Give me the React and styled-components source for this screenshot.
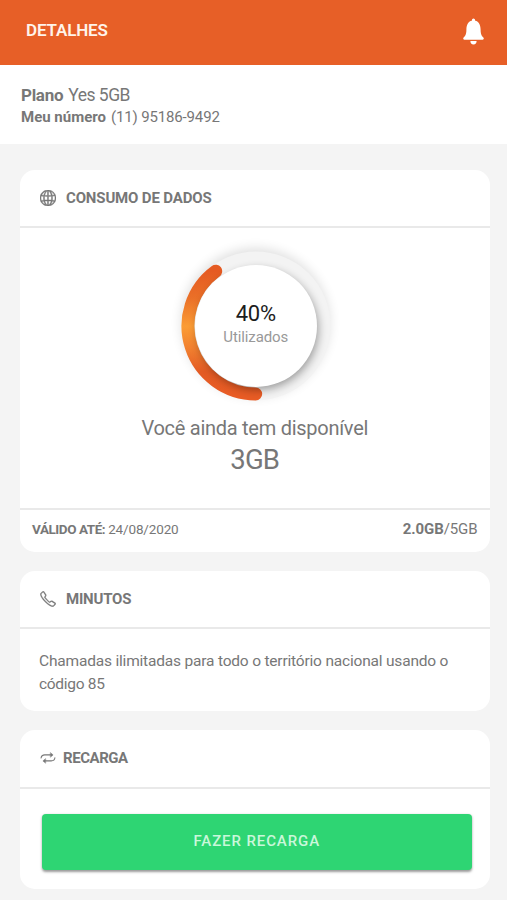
import React from 'react';
import styled, { createGlobalStyle } from 'styled-components';
import { SlGlobe, SlPhone } from 'react-icons/sl';
import { IoIosNotifications } from 'react-icons/io';

const GlobalStyle = createGlobalStyle`
  * { box-sizing: border-box; }
  body {
    margin: 0;
    background: #f4f4f4;
    color: #777;
    font-family: Roboto, "Liberation Sans", sans-serif;
  }
`;

const Screen = styled.div`
  width: 507px;
  height: 900px;
  overflow: hidden;
  background: #f4f4f4;
`;

const Header = styled.header`
  height: 65px;
  padding: 0 17px 0 26px;
  display: flex;
  align-items: center;
  justify-content: space-between;
  background: #e75f27;
  color: #fff;
`;

const Text = styled.span`
  display: ${(p) => (p.$block ? 'block' : 'inline')};
  font-size: ${(p) => p.$size}px;
  line-height: ${(p) => p.$line || 20}px;
  font-weight: ${(p) => p.$weight || 400};
  letter-spacing: ${(p) => p.$track || 0}px;
  white-space: nowrap;
`;

const Title = styled(Text)`
  margin-bottom: 6px;
  color: #fff3ea;
`;

const BellButton = styled.button`
  display: flex;
  padding: 0;
  margin-bottom: 3px;
  border: 0;
  background: none;
  color: #fff;
`;

const Plan = styled.section`
  height: 79px;
  padding: 19px 21px 0;
  background: #fff;
`;

const PlanLine = styled.div`
  display: flex;
  gap: ${(p) => p.$gap}px;
  height: 22px;
  align-items: center;
`;

const Cards = styled.main`
  display: flex;
  flex-direction: column;
  gap: 19px;
  padding: 25.5px 17.5px 0 20px;
`;

const Card = styled.section`
  height: ${(p) => p.$height}px;
  border-radius: 15px;
  background: #fff;
`;

const CardHeader = styled.header`
  display: flex;
  align-items: center;
  height: ${(p) => p.$height || 58.5}px;
  padding: 0 20px;
  gap: ${(p) => p.$gap || 10}px;
  border-bottom: 2px solid #e9e9e9;
`;

const Usage = styled.div`
  display: flex;
  flex-direction: column;
  align-items: center;
  height: 280px;
  padding-top: 8px;
`;

const Gauge = styled.div`
  display: grid;
  place-items: center;
  width: 180px;
  height: 180px;
  margin-left: 2px;
  > * { grid-area: 1 / 1; }
`;

const GaugeLabel = styled.div`
  display: flex;
  flex-direction: column;
  align-items: center;
  padding-bottom: 4px;
  color: #999;
`;

const Percent = styled(Text)`
  color: #1c1c1c;
`;

const Available = styled.div`
  display: flex;
  flex-direction: column;
  align-items: center;
  margin-top: -1px;
`;

const CardFooter = styled.footer`
  display: flex;
  align-items: center;
  justify-content: space-between;
  height: 42px;
  padding: 0 12px 3px;
  border-top: 2px solid #e9e9e9;
`;

const Body = styled.div`
  padding: 20.5px 19px 0;
`;

const ActionArea = styled.div`
  padding: 25.5px 17.5px 0 21.5px;
`;

const ActionButton = styled.button`
  display: flex;
  align-items: center;
  justify-content: center;
  width: 100%;
  height: 55.5px;
  padding: 0 0 1px;
  border: 0;
  border-radius: 4px;
  background: #2ed573;
  color: #c9f7da;
  font-family: inherit;
  box-shadow: 0 1.5px 2.5px rgba(0, 0, 0, 0.4);
`;

const LineIcon = styled.svg`
  fill: none;
  stroke: currentColor;
  stroke-width: 1.1;
  stroke-linecap: round;
  stroke-linejoin: round;
`;

const ArrowHead = styled.path`
  fill: currentColor;
  stroke-width: 0.5;
`;

function LoopIcon() {
  return (
    <LineIcon width="16" height="16" viewBox="0 0 16 16">
      <path d="M1.1 8C1.3 6 2.6 4.9 4.8 4.9H11.5" />
      <ArrowHead d="M10.6 2.8L13.1 4.9L10.6 7Z" />
      <path d="M14.9 7.8C14.7 9.8 13.4 10.9 11.2 10.9H4.5" />
      <ArrowHead d="M5.4 8.8L2.9 10.9L5.4 13Z" />
    </LineIcon>
  );
}

function UsageGauge() {
  return (
    <Gauge>
      <svg width="180" height="180" viewBox="0 0 180 180">
        <defs>
          <linearGradient id="arc" x1="0" y1="35" x2="0" y2="158" gradientUnits="userSpaceOnUse">
            <stop offset="0" stopColor="#e55a22" />
            <stop offset="0.22" stopColor="#ea7028" />
            <stop offset="0.45" stopColor="#fb9c35" />
            <stop offset="0.62" stopColor="#f28230" />
            <stop offset="0.82" stopColor="#e35b24" />
            <stop offset="1" stopColor="#e85c25" />
          </linearGradient>
          <filter id="glow" x="-30%" y="-30%" width="160%" height="160%">
            <feGaussianBlur stdDeviation="6" />
          </filter>
          <filter id="drop" x="-30%" y="-30%" width="160%" height="160%">
            <feGaussianBlur stdDeviation="5" />
          </filter>
          <clipPath id="ring"><circle cx="90" cy="90" r="75" /></clipPath>
        </defs>
        <circle cx="89.5" cy="86.5" r="74" fill="#000" opacity="0.13" filter="url(#glow)" />
        <circle cx="90" cy="90" r="74.5" fill="#f3f3f3" />
        <path d="M49.7 35.2A68 68 0 0 0 89.7 158" fill="none" stroke="url(#arc)" strokeWidth="13" strokeLinecap="round" />
        <g clipPath="url(#ring)">
          <circle cx="92" cy="93.5" r="60" fill="#000" opacity="0.38" filter="url(#drop)" />
        </g>
        <circle cx="90" cy="90" r="61" fill="#fff" />
      </svg>
      <GaugeLabel>
        <Percent $size={22} $line={26} $track={-0.3}>40%</Percent>
        <Text $size={15} $line={20} $track={-0.1}>Utilizados</Text>
      </GaugeLabel>
    </Gauge>
  );
}

export default function App() {
  return (
    <>
      <GlobalStyle />
      <Screen>
        <Header>
          <Title $size={17} $weight={600} $track={-0.15}>DETALHES</Title>
          <BellButton aria-label="Notificações"><IoIosNotifications size={33} /></BellButton>
        </Header>
        <Plan>
          <PlanLine $gap={5}>
            <Text $size={17} $weight={700} $track={-0.3}>Plano</Text>
            <Text $size={17.5} $track={-0.5}>Yes 5GB</Text>
          </PlanLine>
          <PlanLine $gap={5}>
            <Text $size={15} $weight={700}>Meu número</Text>
            <Text $size={15} $track={-0.15}>(11) 95186-9492</Text>
          </PlanLine>
        </Plan>
        <Cards>
          <Card $height={382}>
            <CardHeader>
              <SlGlobe size={16} strokeWidth={30} stroke="currentColor" />
              <Text $size={15} $weight={700} $track={-0.15}>CONSUMO DE DADOS</Text>
            </CardHeader>
            <Usage>
              <UsageGauge />
              <Available>
                <Text $size={20} $line={26} $track={-0.27}>Você ainda tem disponível</Text>
                <Text $size={27.5} $line={37} $track={-0.8}>3GB</Text>
              </Available>
            </Usage>
            <CardFooter>
              <PlanLine $gap={3}>
                <Text $size={13.5} $weight={700} $track={-0.45}>VÁLIDO ATÉ:</Text>
                <Text $size={13.5} $track={-0.15}>24/08/2020</Text>
              </PlanLine>
              <PlanLine $gap={0}>
                <Text $size={15} $weight={700} $track={-0.1}>2.0GB</Text>
                <Text $size={15} $track={-0.1}>/5GB</Text>
              </PlanLine>
            </CardFooter>
          </Card>
          <Card $height={140.5}>
            <CardHeader>
              <SlPhone size={16} strokeWidth={20} stroke="currentColor" />
              <Text $size={15} $weight={700} $track={-0.2}>MINUTOS</Text>
            </CardHeader>
            <Body>
              <Text $block $size={15.5} $line={23} $track={-0.19}>Chamadas ilimitadas para todo o território nacional usando o</Text>
              <Text $block $size={15.5} $line={23} $track={-0.3}>código 85</Text>
            </Body>
          </Card>
          <Card $height={159}>
            <CardHeader $gap={7}>
              <LoopIcon />
              <Text $size={15} $weight={700} $track={-0.45}>RECARGA</Text>
            </CardHeader>
            <ActionArea>
              <ActionButton>
                <Text $size={15} $weight={500} $track={0.9}>FAZER RECARGA</Text>
              </ActionButton>
            </ActionArea>
          </Card>
        </Cards>
      </Screen>
    </>
  );
}
